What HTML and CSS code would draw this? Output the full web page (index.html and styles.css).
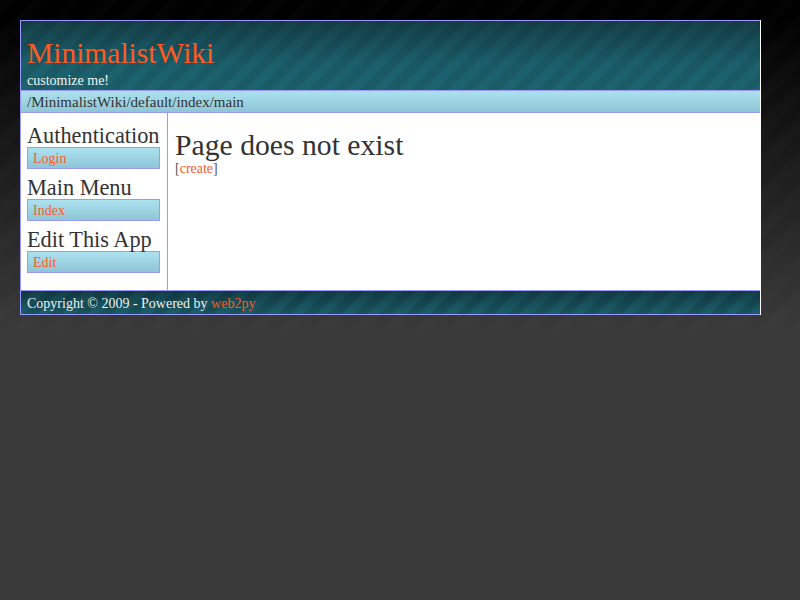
FILE: index.html
```html
<!DOCTYPE html>
<html>
<head>
<meta charset="utf-8">
<title>MinimalistWiki</title>
<link rel="stylesheet" href="styles.css">
</head>
<body>
<div class="wrap">
  <div class="header">
    <h1 class="title">MinimalistWiki</h1>
    <div class="subtitle">customize me!</div>
  </div>
  <div class="crumb">/MinimalistWiki/default/index/main</div>
  <div class="main">
    <div class="sidebar">
      <h3 class="side-title">Authentication</h3>
      <div class="side-box"><a href="#">Login</a></div>
      <h3 class="side-title">Main Menu</h3>
      <div class="side-box"><a href="#">Index</a></div>
      <h3 class="side-title">Edit This App</h3>
      <div class="side-box"><a href="#">Edit</a></div>
    </div>
    <div class="content">
      <h2 class="page-title">Page does not exist</h2>
      <div class="actions">[<a href="#">create</a>]</div>
    </div>
  </div>
  <div class="footer">Copyright © 2009 - Powered by <a href="#">web2py</a></div>
</div>
</body>
</html>
```

FILE: styles.css
```css
html, body {
  margin: 0;
  padding: 0;
}
body {
  min-height: 600px;
  padding-top: 20px;
  box-sizing: border-box;
  font-family: "Liberation Serif", "Times New Roman", serif;
  color: #333;
  background-color: #3a3a3a;
  background-image:
    repeating-linear-gradient(135deg, rgba(255,255,255,0.012) 0 12px, rgba(255,255,255,0) 12px 24px),
    linear-gradient(#000 0, #000 15px, #3a3a3a 330px);
  background-size: 100% 330px, 100% 330px;
  background-repeat: no-repeat;
}
a {
  color: #ff5a1f;
  text-decoration: none;
}
.wrap {
  margin-left: 20px;
  width: 739px;
  border-left: 1px solid #9999ff;
  border-right: 1px solid #fff;
  background: #fff;
}
.header {
  height: 69px;
  box-sizing: content-box;
  border-top: 1px solid #9999ff;
  border-bottom: 1px solid #9999ff;
  padding: 0 6px;
  background:
    repeating-linear-gradient(135deg, rgba(0,0,0,0.08) 0 9px, rgba(0,0,0,0) 9px 18px),
    linear-gradient(#153f48, #1b5f6b 60%, #1c6470);
  overflow: hidden;
}
.title {
  margin: 16px 0 0;
  font-weight: normal;
  font-size: 29.5px;
  line-height: 32px;
  color: #ff5a1f;
}
.subtitle {
  margin-top: 4px;
  font-size: 14px;
  line-height: 16px;
  color: #f4f4f4;
}
.crumb {
  height: 21px;
  line-height: 22px;
  padding: 0 6px;
  font-size: 15px;
  color: #333;
  border-bottom: 1px solid #9999ff;
  background: linear-gradient(#ace2f0, #8ec6d6);
}
.main {
  display: flex;
  height: 177px;
}
.sidebar {
  flex: none;
  width: 147px;
  border-right: 1px solid #9999ff;
  padding: 4px 0 0 6px;
  box-sizing: border-box;
}
.side-title {
  margin: 7px 0 0;
  font-weight: normal;
  font-size: 22.3px;
  line-height: 23px;
  color: #333;
  white-space: nowrap;
}
.side-box {
  width: 133px;
  height: 22px;
  line-height: 21px;
  font-size: 14px;
  padding-left: 5px;
  box-sizing: border-box;
  border: 1px solid #9999ff;
  background: linear-gradient(#ace2f0, #8ec6d6);
}
.content {
  flex: 1;
  padding: 17px 0 0 7px;
}
.page-title {
  margin: 0;
  font-weight: normal;
  font-size: 29.7px;
  line-height: 30px;
  color: #333;
}
.actions {
  margin-top: 1px;
  font-size: 14px;
  line-height: 16px;
  color: #555;
}
.footer {
  height: 21px;
  padding-top: 2px;
  line-height: 21px;
  padding-left: 6px;
  font-size: 14px;
  color: #f0f0f0;
  border-top: 1px solid #9999ff;
  border-bottom: 1px solid #9999ff;
  background:
    repeating-linear-gradient(135deg, rgba(0,0,0,0.12) 0 9px, rgba(0,0,0,0) 9px 18px),
    linear-gradient(#153f48, #1b5e6a);
}
```
